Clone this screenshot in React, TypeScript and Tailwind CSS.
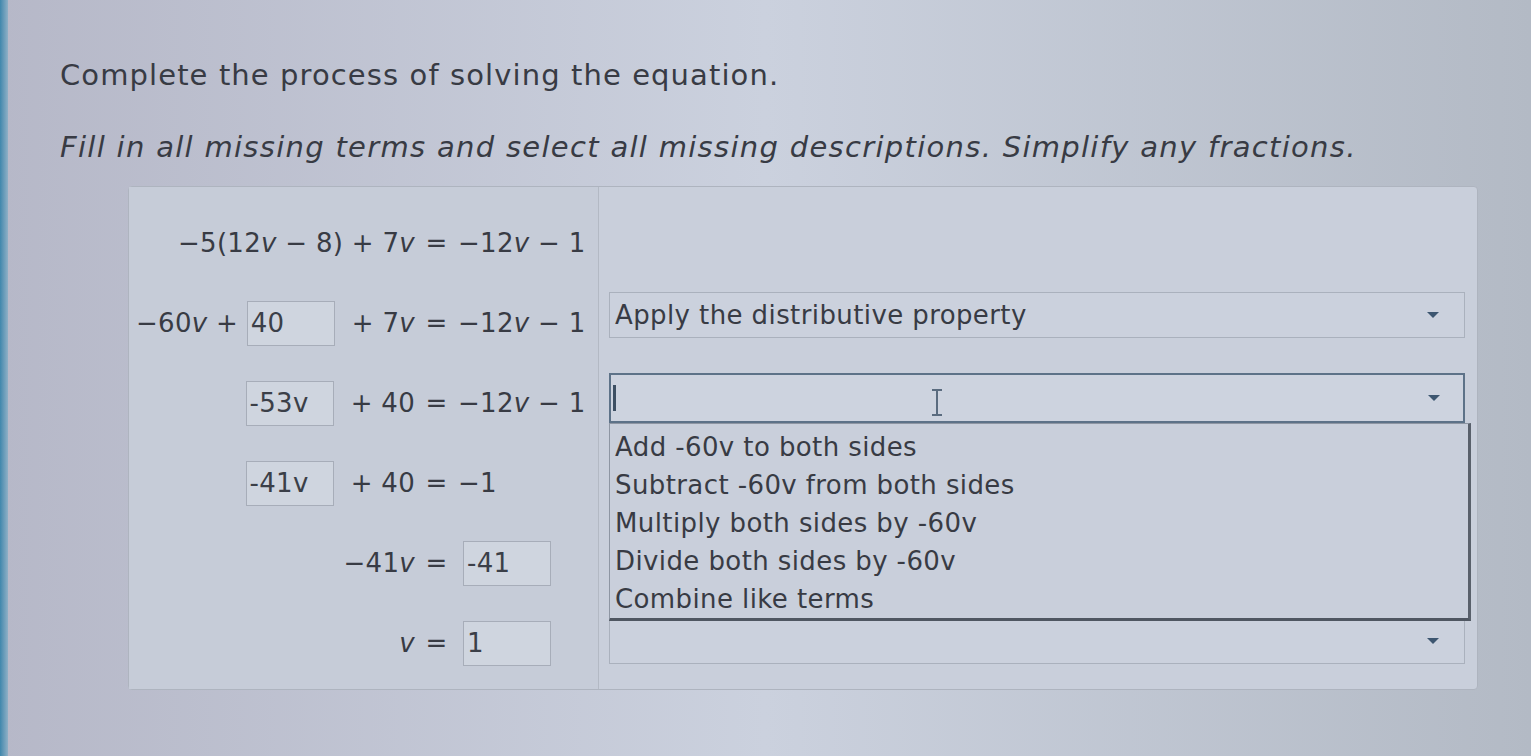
import { ReactNode } from "react";

const font = { fontFamily: '"DejaVu Sans", Verdana, sans-serif' };

const Arrow = () => (
  <svg width="14" height="8" viewBox="0 0 14 8" className="shrink-0">
    <path d="M1 1 L13 1 L7 7 Z" fill="#3d5670" />
  </svg>
);

const Box = ({ value }: { value: string }) => (
  <span className="inline-flex items-center h-[45px] w-[88px] border border-[#a7adb9] bg-[#cfd5df] pl-[3px] text-[#3b3f48]">
    {value}
  </span>
);

const V = () => <i>v</i>;

type RowProps = { lhs: ReactNode; rhs: ReactNode };

const Row = ({ lhs, rhs }: RowProps) => (
  <div className="flex items-center h-[80px]">
    <div className="w-[286px] flex justify-end items-center whitespace-pre">{lhs}</div>
    <div className="w-[43px] text-center">=</div>
    <div className="flex-1 flex items-center whitespace-pre">{rhs}</div>
  </div>
);

const options = [
  "Add -60v to both sides",
  "Subtract -60v from both sides",
  "Multiply both sides by -60v",
  "Divide both sides by -60v",
  "Combine like terms",
];

export default function App() {
  return (
    <div
      style={font}
      className="relative w-[1531px] h-[756px] overflow-hidden bg-linear-to-r from-[#b6b8c8] via-[#cbd1de] to-[#b3bac5] text-[#383b44]"
    >
      <div className="absolute left-0 top-0 h-full w-[8px] bg-linear-to-r from-[#3f87ac] to-[#8fb0c6]" />

      <div className="pl-[60px] pt-[55px]">
        <p className="text-[29px] leading-[40px] tracking-[1.1px] text-[#383b44]">
          Complete the process of solving the equation.
        </p>
        <p className="mt-[32px] text-[29px] leading-[40px] tracking-[1.3px] italic text-[#383b44]">
          Fill in all missing terms and select all missing descriptions. Simplify any fractions.
        </p>
      </div>

      <div className="ml-[128px] mt-[19px] w-[1350px] h-[504px] flex border border-[#aeb4bf] rounded-[4px] bg-[#c9cfdb]">
        <div className="w-[470px] pt-[16px] text-[26px] tracking-[0.3px] border-r border-[#b3b9c4] bg-[#c6ccd8]">
          <Row
            lhs={<span>−5(12<V /> − 8) + 7<V /></span>}
            rhs={<span>−12<V /> − 1</span>}
          />
          <Row
            lhs={
              <>
                <span>−60<V /> + </span>
                <Box value="40" />
                <span>  + 7<V /></span>
              </>
            }
            rhs={<span>−12<V /> − 1</span>}
          />
          <Row
            lhs={
              <>
                <Box value="-53v" />
                <span>  + 40</span>
              </>
            }
            rhs={<span>−12<V /> − 1</span>}
          />
          <Row
            lhs={
              <>
                <Box value="-41v" />
                <span>  + 40</span>
              </>
            }
            rhs={<span>−1</span>}
          />
          <Row
            lhs={<span>−41<V /></span>}
            rhs={<span className="pl-[5px]"><Box value="-41" /></span>}
          />
          <Row
            lhs={<V />}
            rhs={<span className="pl-[5px]"><Box value="1" /></span>}
          />
        </div>

        <div className="flex-1 relative pl-[10px] pr-[12px] pt-[105px] text-[26px] tracking-[0.4px]">
          <div className="h-[46px] flex items-center justify-between border border-[#aab1bd] bg-[#cbd1dd] pl-[5px] pr-[24px]">
            <span>Apply the distributive property</span>
            <Arrow />
          </div>

          <div className="relative mt-[35px]">
            <div className="relative h-[50px] flex items-center justify-between border-2 border-[#5d7288] bg-[#cdd3df] pl-[2px] pr-[22px]">
              <span className="w-[3px] h-[26px] bg-[#3d4f63]" />
              <Arrow />
              <svg width="14" height="27" viewBox="0 0 14 27" className="absolute left-[319px] top-[14px]">
                <path d="M2 1 H12 M7 1 V26 M2 26 H12" stroke="#5a6b7f" strokeWidth="2" fill="none" />
              </svg>
            </div>

            <div className="absolute left-0 top-full w-[862px] z-10 border border-[#8e96a3] border-r-[3px] border-b-[3px] border-r-[#59606b] border-b-[#4f5661] bg-[#c9cfdb] pt-[4px]">
              {options.map((o) => (
                <div key={o} className="h-[38px] flex items-center pl-[5px]">
                  {o}
                </div>
              ))}
            </div>
          </div>

          <div className="mt-[195px] h-[46px] flex items-center justify-end border border-[#aab1bd] bg-[#cbd1dd] pr-[24px]">
            <Arrow />
          </div>
        </div>
      </div>
    </div>
  );
}
